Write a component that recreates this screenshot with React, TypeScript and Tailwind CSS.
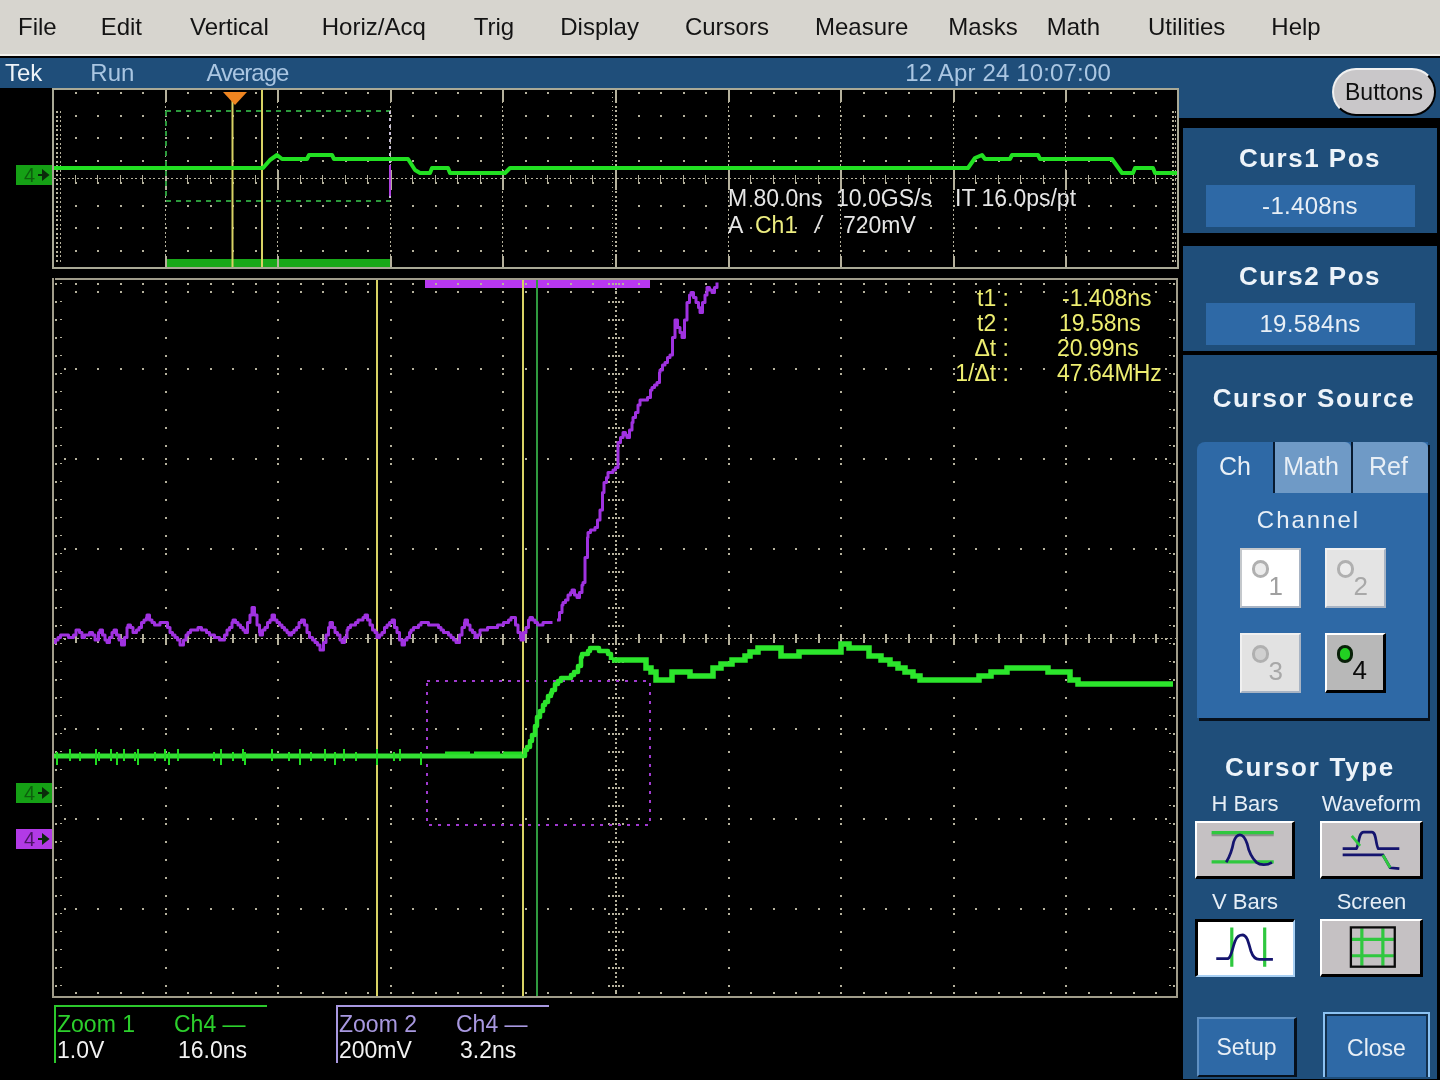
const MENU = [
  { label: 'File', className: 'ml-[18px]' },
  { label: 'Edit', className: 'ml-[44px]' },
  { label: 'Vertical', className: 'ml-[48px]' },
  { label: 'Horiz/Acq', className: 'ml-[53px]' },
  { label: 'Trig', className: 'ml-[48px]' },
  { label: 'Display', className: 'ml-[46px]' },
  { label: 'Cursors', className: 'ml-[46px]' },
  { label: 'Measure', className: 'ml-[46px]' },
  { label: 'Masks', className: 'ml-[40px]' },
  { label: 'Math', className: 'ml-[29px]' },
  { label: 'Utilities', className: 'ml-[48px]' },
  { label: 'Help', className: 'ml-[46px]' },
]

const X0 = 52
const X1 = 1178
const MINOR = 22.52
const toPath = (pts: number[][]) => pts.map((p, i) => `${i ? 'L' : 'M'}${p[0].toFixed(1)} ${p[1].toFixed(1)}`).join(' ')
const dot = (x: number, y: number, w = 2, h = 2) => `M${Math.round(x)} ${Math.round(y)}h${w}v${h}h-${w}z`
const range = (from: number, to: number, step: number) => {
  const out: number[] = []
  for (let v = from; v <= to + 0.01; v += step) out.push(v)
  return out
}

// resample a polyline into the scope's pixel staircase
const stairs = (pts: number[][], stepX: number, stepY: number) => {
  const out: number[][] = []
  for (let i = 0; i < pts.length - 1; i++) {
    const [ax, ay] = pts[i]
    const [bx, by] = pts[i + 1]
    for (let x = ax; x < bx; x += stepX) {
      const y = ay + ((by - ay) * (x - ax)) / (bx - ax)
      const snapped = Math.round(y / stepY) * stepY
      if (out.length) out.push([x, out[out.length - 1][1]])
      out.push([x, snapped])
    }
  }
  return out
}

// graticule dots for both windows, in screen coords
const upperGrid = () => {
  let d = ''
  for (const x of range(X0 + MINOR, X1 - 4, MINOR)) for (const y of range(89 + 3, 268, 22.5)) d += dot(x, y)
  for (let i = 1; i < 10; i++) {
    const x = X0 + i * 112.6
    for (const y of range(92, 266, 4.5)) d += dot(x, y, 1, 2)
    d += `M${Math.round(x)} 90h2v12h-2z M${Math.round(x)} 256h2v12h-2z M${Math.round(x)} 170h2v20h-2z`
  }
  for (const y of range(111, 262, 4.5)) {
    d += dot(56, y) + dot(60, y, 1, 2) + dot(1172, y) + dot(1175, y, 1, 2)
  }
  for (const x of range(54, 1176, 4.5)) d += dot(x, 178, 2, 1)
  for (const x of range(X0 + MINOR, X1 - 4, MINOR)) d += `M${Math.round(x)} 175h1v8h-1z`
  for (const y of range(92, 266, 4.5)) d += dot(616, y, 1, 2) + dot(612, y, 1, 1)
  return d
}

const lowerGrid = () => {
  let d = ''
  for (const y of [283, 291, 368, 458, 548, 728, 818, 908, 992])
    for (const x of range(X0 + MINOR, X1 - 4, MINOR)) d += dot(x, y)
  for (let i = 1; i < 10; i++) {
    const x = X0 + i * 112.6
    for (const y of range(283, 992, 18)) d += dot(x, y)
  }
  for (const y of range(283, 992, 18)) {
    d += dot(55, y) + dot(1173, y)
    d += dot(60, y, 2, 1) + dot(1169, y, 2, 1)
  }
  for (const y of [368, 458, 548, 638, 728, 818, 908]) d += dot(64, y) + dot(1165, y)
  for (const x of range(54, 1176, 4.5)) d += dot(x, 638, 2, 1)
  for (const x of range(X0 + MINOR, X1 - 4, MINOR)) d += `M${Math.round(x)} 634h2v9h-2z`
  for (const y of range(283, 992, 4.5)) d += dot(615, y, 2, 2)
  for (const y of range(283, 992, 18)) {
    d += dot(608, y) + dot(612, y) + dot(618, y) + dot(622, y)
  }
  for (const y of [368, 458, 548, 638, 728, 818, 908]) d += dot(604, y) + dot(626, y)
  return d
}

// traces were read off the zoomed reference
const purpleNoise = [
  [53, 643], [61, 635], [71, 637], [77, 630], [82, 637], [90, 633], [96, 640], [100, 629], [107, 643], [114, 629], [122, 645], [128, 625], [134, 633], [147, 616], [155, 625], [165, 622], [170, 632], [181, 645], [188, 632], [193, 630], [199, 628], [207, 633], [222, 640], [233, 620], [245, 633], [252, 607], [260, 635], [272, 616], [277, 622], [289, 635], [302, 620], [310, 638], [321, 650], [330, 623], [342, 643], [348, 628], [365, 616], [377, 637], [392, 620], [402, 645], [411, 630], [421, 623], [436, 625], [457, 643], [465, 620], [475, 638], [480, 630], [501, 625], [513, 617], [521, 640], [530, 617], [538, 625], [545, 622], [555, 623],
]
const purpleRise = [
  [557, 620], [563, 603], [572, 590], [577, 598], [583, 583], [585, 557], [588, 533], [595, 528], [600, 510], [604, 483], [608, 473], [616, 468], [618, 443], [623, 432], [627, 438], [633, 418], [640, 400], [648, 398], [652, 387], [657, 383], [660, 369], [670, 355], [675, 320], [682, 338], [687, 303], [691, 292], [700, 312], [707, 287], [712, 293], [719, 279],
]
const greenBaseSpikes = [57, 70, 80, 96, 99, 111, 117, 124, 135, 138, 155, 165, 169, 178, 214, 221, 233, 243, 245, 272, 289, 300, 311, 325, 335, 344, 356, 377, 394, 400, 421]
const greenRise = [
  [522, 755], [527, 748], [532, 735], [537, 718], [545, 702], [552, 690], [558, 680], [568, 677], [575, 672], [582, 655], [590, 649], [605, 650], [612, 660],
]
const greenTail = [
  [612, 661], [638, 661], [651, 673], [656, 680], [668, 680], [672, 672], [686, 672], [690, 675], [707, 675], [713, 667], [724, 662], [745, 657], [750, 650], [773, 648], [784, 657], [799, 653], [833, 653], [841, 645], [861, 648], [873, 657], [890, 662], [905, 670], [920, 679], [971, 679], [991, 673], [1008, 667], [1044, 667], [1048, 671], [1068, 672], [1070, 679], [1085, 685], [1177, 685],
]
const upperTrace = [
  [53, 168], [263, 168], [270, 160], [277, 155], [282, 159], [307, 159], [309, 155], [332, 155], [334, 159], [408, 159], [415, 170], [420, 173], [430, 173], [432, 168], [448, 168], [450, 173], [505, 173], [510, 168], [968, 168], [975, 158], [982, 155], [985, 159], [1010, 159], [1012, 155], [1038, 155], [1040, 159], [1112, 159], [1122, 173], [1133, 173], [1135, 168], [1153, 168], [1155, 173], [1177, 173],
]

const Marker = ({ top, color, text }: { top: string; color: string; text: string }) => (
  <div className={`absolute left-[-36px] flex h-5 w-9 items-center ${top} ${color}`}>
    <span className={`ml-1 w-[15px] text-right text-[20px] leading-5 ${text}`}>4</span>
    <svg width="14" height="14" viewBox="0 0 14 14" className="ml-[2px]">
      <path d="M1 7h8M6 3l5 4-5 4z" stroke="#0b2a0b" strokeWidth="2" fill="#0b2a0b" />
    </svg>
  </div>
)

const UpperScope = () => (
  <div className="relative ml-[52px] h-[181px] w-[1127px] text-[23px] leading-7 text-[#e6e6e6]">
    <svg width="1127" height="181" viewBox="52 88 1127 181" className="block">
      <rect x="166" y="259" width="224" height="9" fill="#19a819" />
      <path d={upperGrid()} fill="#b5b19c" shapeRendering="crispEdges" />
      <path d="M166 111H390M166 201H390M166 111V201" stroke="#2c9a3c" strokeWidth="2" strokeDasharray="5 5" fill="none" />
      <path d="M390 111V201" stroke="#c9c0d8" strokeWidth="2" strokeDasharray="3 4" />
      <path d="M390 165V196" stroke="#b040e0" strokeWidth="2" />
      <path d="M232.5 95V268M262 89V268" stroke="#d8d264" strokeWidth="2" />
      <path d={toPath(upperTrace)} stroke="#22e022" strokeWidth="4" fill="none" strokeLinejoin="round" />
      <polygon points="223,92 247,92 235,105" fill="#ee8420" />
      <rect x="53" y="89" width="1125" height="179" fill="none" stroke="#a9a996" strokeWidth="2" />
    </svg>
    <Marker top="top-[77px]" color="bg-[#15a015]" text="text-[#0d5f0d]" />
    <div className="absolute left-[676px] top-[96px] flex whitespace-nowrap">
      <span className="w-[108px]">M 80.0ns</span>
      <span className="w-[119px]">10.0GS/s</span>
      <span>IT 16.0ps/pt</span>
    </div>
    <div className="absolute left-[676px] top-[123px] flex whitespace-nowrap">
      <span className="w-[27px]">A</span>
      <span className="w-[60px] text-[#eded80]">Ch1</span>
      <span className="w-[28px] italic">/</span>
      <span>720mV</span>
    </div>
  </div>
)

const LowerScope = () => (
  <div className="relative ml-[52px] mt-[9px] h-[720px] w-[1127px]">
    <svg width="1127" height="720" viewBox="52 278 1127 720" className="block">
      <rect x="425" y="279" width="225" height="9" fill="#b838f0" />
      <path d={lowerGrid()} fill="#b5b19c" shapeRendering="crispEdges" />
      <rect x="427" y="681" width="223" height="144" fill="none" stroke="#a03ad0" strokeWidth="2" strokeDasharray="3 6" />
      <path d="M377 278V997M523 278V997" stroke="#d8d264" strokeWidth="2" />
      <path d="M537 278V997" stroke="#2f9a3f" strokeWidth="2" />
      <path d={toPath(stairs(purpleNoise, 2.5, 2.5))} stroke="#a032e0" strokeWidth="3" fill="none" strokeLinejoin="round" />
      <path d={toPath(stairs(purpleRise, 2.5, 2.5))} stroke="#a032e0" strokeWidth="3" fill="none" strokeLinejoin="round" />
      <path d="M53 756H522" stroke="#34e034" strokeWidth="5" />
      {greenBaseSpikes.map((x, i) => (
        <path key={x} d={`M${x} ${i % 2 ? 749 : 752}V${i % 3 ? 761 : 765}`} stroke="#22dc22" strokeWidth="2" />
      ))}
      <path d="M445 753H470M474 753H500M503 753H522" stroke="#22dc22" strokeWidth="3" />
      <path d={toPath(stairs(greenRise, 3, 3))} stroke="#2ce62c" strokeWidth="4.5" fill="none" strokeLinejoin="round" />
      <path d={toPath(stairs(greenTail, 8, 4))} stroke="#2ce62c" strokeWidth="5.5" fill="none" strokeLinejoin="miter" />
      <path d="M55 279H1178M53 278V998M53 997H1178M1177 278V998" fill="none" stroke="#a09c8a" strokeWidth="2" />
    </svg>
    <Marker top="top-[505px]" color="bg-[#15a015]" text="text-[#0d5f0d]" />
    <Marker top="top-[551px]" color="bg-[#b23ae6]" text="text-[#4b1466]" />
    <div className="absolute left-[901px] top-[8px] grid grid-cols-[56px_53px_auto] whitespace-nowrap text-[23px] leading-[25px] text-[#eeee70]">
      <span className="text-right">t1 :</span>
      <span className="col-start-3">-1.408ns</span>
      <span className="text-right">t2 :</span>
      <span className="col-start-3 ml-[-3px]">19.58ns</span>
      <span className="text-right">Δt :</span>
      <span className="col-start-3 ml-[-5px]">20.99ns</span>
      <span className="text-right">1/Δt :</span>
      <span className="col-start-3 ml-[-5px]">47.64MHz</span>
    </div>
  </div>
)

const Readout = ({ border, color, name, volts, time, className }: { border: string; color: string; name: string; volts: string; time: string; className?: string }) => (
  <div className={`h-[58px] w-[213px] border-l-2 border-t-2 pl-[1px] pt-[4px] text-[23px] leading-[26px] ${border} ${className ?? ''}`}>
    <div className="grid grid-cols-[117px_auto] whitespace-nowrap">
      <span className={color}>{name}</span>
      <span className={color}>Ch4 —</span>
      <span className="text-[#f2f2f2]">{volts}</span>
      <span className="ml-[4px] text-[#f2f2f2]">{time}</span>
    </div>
  </div>
)

const ValueCard = ({ title, value, className }: { title: string; value: string; className?: string }) => (
  <div className={`h-[105px] w-[254px] bg-[#1f4e7a] pt-[13px] ${className ?? ''}`}>
    <div className="text-center text-[26px] font-bold leading-[34px] tracking-[1.5px] text-[#edf3f9]">{title}</div>
    <div className="mx-auto mt-[10px] flex h-[42px] w-[209px] items-center justify-center bg-[#2e69a6] text-[24px] tracking-[0.3px] text-[#e8eff6]">{value}</div>
  </div>
)

const ChannelButton = ({ n, className, dot, digit }: { n: number; className: string; dot: string; digit: string }) => (
  <button className={`flex h-[60px] w-[61px] justify-between pb-[8px] pl-[10px] pr-[16px] pt-[10px] ${className}`}>
    <span className={`h-[18px] w-[18px] rounded-full border-[3px] ${dot}`} />
    <span className={`self-end text-[26px] leading-6 ${digit}`}>{n}</span>
  </button>
)

const RAISED = 'border-b-[3px] border-l-2 border-r-[3px] border-t-2 border-b-black border-l-white border-r-black border-t-white bg-[#c5c1c3]'

const TypeButton = ({ label, selected, children }: { label: string; selected?: boolean; children: React.ReactNode }) => (
  <div className="flex flex-col items-center">
    <div className="h-[30px] whitespace-nowrap text-[22px] leading-[30px] text-[#e6eef6]">{label}</div>
    <button
      className={`mt-[2px] h-[58px] w-full ${
        selected
          ? 'border-b-2 border-l-[3px] border-r-2 border-t-[3px] border-b-[#a8d0f4] border-l-black border-r-[#a8d0f4] border-t-black bg-white'
          : RAISED
      }`}
    >
      <svg viewBox="0 0 100 58" className="block h-full w-full">
        {children}
      </svg>
    </button>
  </div>
)

const RightColumn = () => (
  <div className="flex w-[257px] flex-col">
    <div className="ml-[-4px] flex h-[60px] justify-end bg-[#1f4e7a] pr-[4px] pt-[10px]">
      <button className="h-[48px] w-[104px] rounded-[24px] border-2 border-b-black border-l-[#f0f0f0] border-r-black border-t-[#f0f0f0] bg-[#c9c7c9] text-[23px] text-[#101010]">Buttons</button>
    </div>
    <ValueCard title="Curs1 Pos" value="-1.408ns" className="mt-[10px]" />
    <ValueCard title="Curs2 Pos" value="19.584ns" className="mt-[13px]" />
    <div className="mt-[4px] h-[724px] w-[254px] bg-[#1f4e7a] pt-[26px]">
      <div className="pl-2 text-center text-[26px] font-bold leading-[34px] tracking-[1.7px] text-[#edf3f9]">Cursor Source</div>
      <div className="ml-[14px] mt-[27px] h-[276px] w-[231px] rounded-tl-[8px] bg-[#2e69a6] shadow-[2px_3px_0_#06101c]">
        <div className="flex h-[51px] text-[25px] leading-[48px] text-[#e8eff6]">
          <span className="w-[76px] text-center">Ch</span>
          <span className="w-[78px] rounded-tr-[6px] border-l-2 border-[#071a30] bg-[#6f9ac6] pr-1 text-center">Math</span>
          <span className="w-[77px] rounded-tr-[6px] border-l-2 border-[#071a30] bg-[#6f9ac6] pr-1 text-center">Ref</span>
        </div>
        <div className="mt-[10px] pr-2 text-center text-[24px] leading-[34px] tracking-[2px] text-[#e8eff6]">Channel</div>
        <div className="ml-[43px] mt-[11px] grid grid-cols-[61px_61px] gap-x-6 gap-y-[25px]">
          <ChannelButton n={1} className="border-b-2 border-l-2 border-r-2 border-t-2 border-b-[#a8b4c4] border-l-[#c4c8cc] border-r-[#a8b4c4] border-t-[#c4c8cc] bg-white" dot="border-[#b0b0b0] bg-[#ececec]" digit="text-[#a0a0a0]" />
          <ChannelButton n={2} className="border-b-2 border-l-2 border-r-2 border-t-2 border-b-[#a8b4c4] border-l-[#f0f0f0] border-r-[#a8b4c4] border-t-[#f0f0f0] bg-[#e4e4e4]" dot="border-[#b0b0b0] bg-[#ececec]" digit="text-[#a8a8a8]" />
          <ChannelButton n={3} className="border-b-2 border-l-2 border-r-2 border-t-2 border-b-[#a8b4c4] border-l-[#f0f0f0] border-r-[#a8b4c4] border-t-[#f0f0f0] bg-[#e2e2e2]" dot="border-[#b0b0b0] bg-[#d0d0d0]" digit="text-[#a8a8a8]" />
          <ChannelButton n={4} className="border-b-[3px] border-l-2 border-r-[3px] border-t-2 border-b-black border-l-white border-r-black border-t-white bg-[#b8b8b8]" dot="border-[#082008] bg-[#22d022]" digit="text-[#0a0a0a]" />
        </div>
      </div>
      <div className="mt-[32px] text-center text-[26px] font-bold leading-[34px] tracking-[1.7px] text-[#edf3f9]">Cursor Type</div>
      <div className="ml-[12px] mt-[5px] grid grid-cols-[100px_103px] gap-x-[25px] gap-y-[8px]">
        <TypeButton label="H Bars">
          <path d="M14 13H82" stroke="#8f8f8f" strokeWidth="3" />
          <path d="M14 10.5H82M14 42.5H82" stroke="#2fc83f" strokeWidth="3.5" />
          <path d="M30 43C33 38 36 32 38 21C40 15 42 13 45 13C49 13 51 17 53 23C55 33 58 38 63 43C67 46 74 47 80 43" stroke="#14146e" strokeWidth="3" fill="none" />
        </TypeButton>
        <TypeButton label="Waveform">
          <path d="M19 28H34C37 24 36 10 42 10H51C56 10 55 24 58 28H81M19 35H63L71 49L81 50" stroke="#14146e" strokeWidth="3" fill="none" />
          <path d="M29 14L38 25M63 35L71 49" stroke="#2fc83f" strokeWidth="3" fill="none" />
        </TypeButton>
        <TypeButton label="V Bars" selected>
          <path d="M35 6V49M71 6V49" stroke="#2fc83f" strokeWidth="3.5" />
          <path d="M18 40H31C35 38 36 26 39 20C41 15 44 14 47 14C52 15 53 22 56 32C58 38 61 41 65 41H80" stroke="#14146e" strokeWidth="3" fill="none" />
        </TypeButton>
        <TypeButton label="Screen">
          <path d="M40 8V49M63 8V49M29 20H75M29 38H75" stroke="#2fc83f" strokeWidth="3.5" />
          <rect x="28" y="7" width="48" height="43" fill="none" stroke="#0a0a0a" strokeWidth="2.5" />
        </TypeButton>
      </div>
      <div className="ml-[14px] mt-[35px] flex items-end text-[23px] text-[#e8eff6]">
        <button className="h-[60px] w-[100px] border-b-2 border-l-2 border-r-[3px] border-t-2 border-b-[#06101c] border-l-[#5f90c2] border-r-[#06101c] border-t-[#5f90c2] bg-[#2e69a6]">Setup</button>
        <button className="ml-[26px] h-[65px] w-[107px] border-2 border-b-0 border-[#8cc2f2] bg-[#2e69a6] pt-[6px] shadow-[inset_2px_2px_0_#12304e,inset_-2px_0_0_#12304e]">Close</button>
      </div>
    </div>
  </div>
)

export default function App() {
  return (
    <div className="h-[1080px] w-[1440px] overflow-hidden bg-black font-['Liberation_Sans',Arial,sans-serif] blur-[0.4px]">
      <div className="flex h-[56px] items-center border-b-2 border-[#f2f1ec] bg-[#d7d5cf] pb-[1px] text-[24px] text-[#141414]">
        {MENU.map((item) => (
          <span key={item.label} className={item.className}>
            {item.label}
          </span>
        ))}
      </div>
      <div className="mt-[2px] flex">
        <div className="w-[1183px]">
          <div className="flex h-[30px] items-center bg-[#1f4e7a] text-[24px] leading-[30px] text-[#aac6e2]">
            <span className="ml-[5px] text-[#eef3f8]">Tek</span>
            <span className="ml-[48px]">Run</span>
            <span className="ml-[72px] tracking-[-1px]">Average</span>
            <span className="ml-[617px] tracking-[0.15px]">12 Apr 24 10:07:00</span>
          </div>
          <UpperScope />
          <LowerScope />
          <div className="ml-[54px] mt-[7px] flex">
            <Readout border="border-[#2cc82c]" color="text-[#2cd02c]" name="Zoom 1" volts="1.0V" time="16.0ns" />
            <Readout border="border-[#a898e0]" color="text-[#a898e0]" name="Zoom 2" volts="200mV" time="3.2ns" className="ml-[69px]" />
          </div>
        </div>
        <RightColumn />
      </div>
    </div>
  )
}
